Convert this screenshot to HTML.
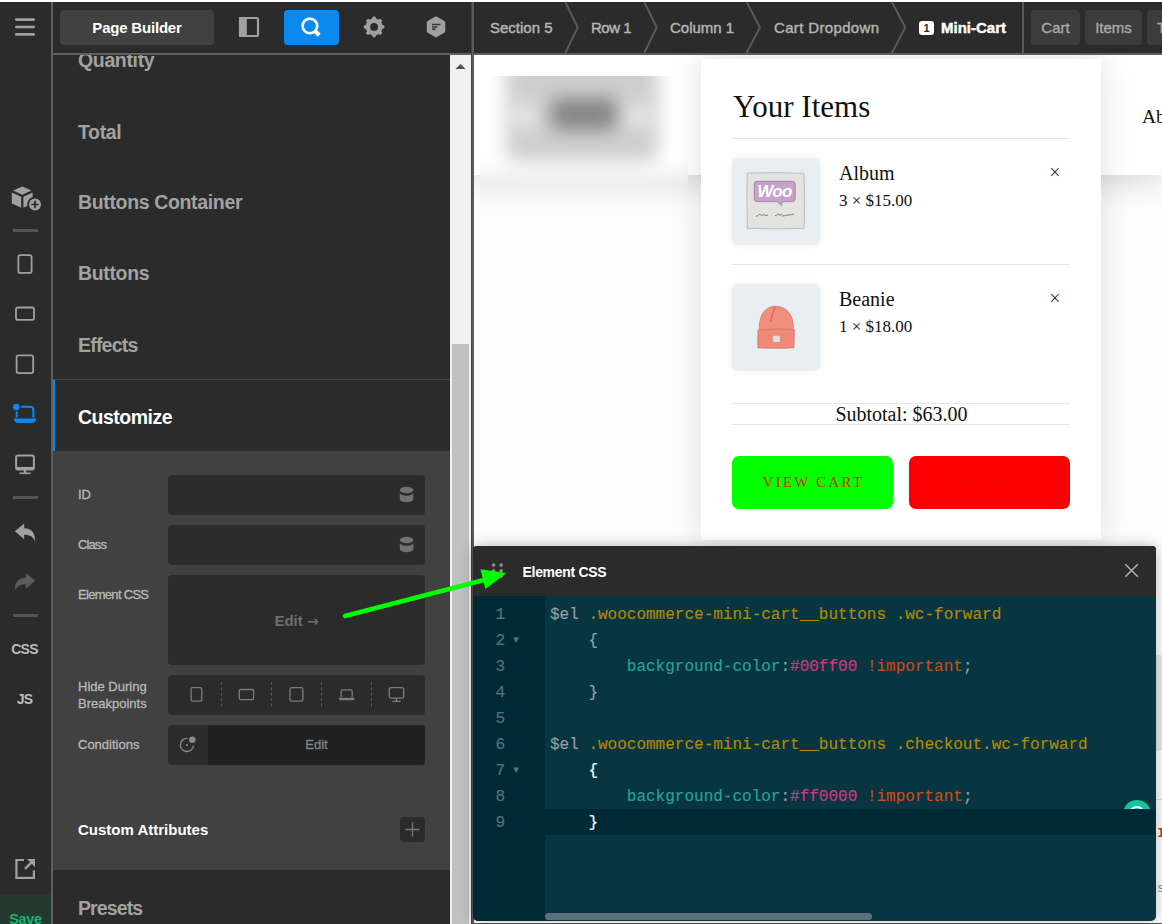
<!DOCTYPE html>
<html lang="en">
<head>
<meta charset="utf-8">
<title>Page Builder - Element CSS</title>
<style>
*{box-sizing:border-box;margin:0;padding:0}
html,body{width:1162px;height:924px;overflow:hidden;background:#fff}
body{position:relative;font-family:"Liberation Sans",sans-serif;color:#a0a0a0}
.abs{position:absolute}
svg{position:absolute;overflow:visible}
/* ---------- left icon bar ---------- */
#bar{left:0;top:2px;width:51px;height:922px;background:#2b2b2b}
#barline{left:51px;top:2px;width:2px;height:922px;background:#5e5e5e}
.sep{left:13px;width:25px;height:3px;background:#555}
.bartxt{left:-1px;width:51px;text-align:center;font-weight:700;font-size:14px;color:#bcbcbc;line-height:18px;letter-spacing:-.8px}
#save{left:0;top:894px;width:51px;height:30px;background:#24392f}
#savetxt{left:0;top:910px;width:51px;text-align:center;font-weight:700;font-size:14.5px;line-height:18px;color:#10b86c;letter-spacing:-.3px}
/* ---------- top bar ---------- */
#top{left:53px;top:2px;width:1109px;height:51px;background:#2b2b2b}
#topline{left:53px;top:53px;width:1109px;height:2px;background:#5e5e5e}
#pb{left:60px;top:10px;width:154px;height:35px;border-radius:4px;background:#414141;color:#fff;font-weight:700;font-size:15px;line-height:35px;text-align:center;letter-spacing:-.2px}
#srch{left:284px;top:10px;width:55px;height:35px;border-radius:4px;background:#0a8af0}
.crumb{top:18.5px;font-size:15px;line-height:18px;color:#b4b4b4;white-space:nowrap;-webkit-text-stroke:.45px}
.tab{top:10px;height:35px;border-radius:4px;background:#3c3c3c;color:#a8a8a8;font-size:15px;line-height:35px;text-align:center;white-space:nowrap;-webkit-text-stroke:.4px}
/* ---------- left panel ---------- */
#panel{left:53px;top:55px;width:397px;height:869px;background:#2b2b2b;overflow:hidden}
.item{left:25px;font-weight:700;font-size:19.5px;line-height:24px;color:#a2a2a2;white-space:nowrap;letter-spacing:-.35px}
#light{left:0;top:396px;width:397px;height:419px;background:#414141}
.lbl{left:25px;font-size:13px;line-height:17px;color:#b8b8b8;white-space:nowrap;-webkit-text-stroke:.3px}
.inp{left:115px;width:257px;background:#2b2b2b;border-radius:4px}
/* scrollbar */
#sb{left:450px;top:55px;width:21px;height:869px;background:#f1f1f1}
#sbt{left:452px;top:344px;width:17px;height:580px;background:#c1c1c1}
#vline{left:471px;top:2px;width:3px;height:922px;background:linear-gradient(90deg,#444 0,#444 1px,#5a5a5a 1px,#5a5a5a 3px)}
/* ---------- preview ---------- */
#pv{left:474px;top:55px;width:688px;height:869px;background:#fdfdfd;overflow:hidden;font-family:"Liberation Serif",serif;color:#111}
#hdr{left:0;top:0;width:688px;height:120px;background:#fff;box-shadow:0 0 36px rgba(0,0,0,.22)}
#logoclip{left:6px;top:21px;width:208px;height:158px;overflow:hidden;background:#fdfdfd}
#logoblur{left:-40px;top:-40px;width:288px;height:240px;background:#fdfdfd;filter:blur(9px)}
#dd{left:227px;top:4px;width:400px;height:481px;background:#fff;box-shadow:0 0 30px rgba(0,0,0,.13)}
.hr{left:31px;width:338px;height:1px;background:#e6e6e6}
.th{left:31px;width:88px;height:87px;border-radius:6px;background:#e8eef2;box-shadow:0 0 7px rgba(0,0,0,.07)}
.woo{left:51.5px;top:125px;width:44px;text-align:center;font:italic 700 17px/16px "Liberation Sans",sans-serif;color:#fff;letter-spacing:-.6px}
.nm{left:138px;font-size:20px;line-height:24px;white-space:nowrap}
.qt{left:138px;font-size:17px;line-height:20px;white-space:nowrap}
.rm{left:346px;width:16px;text-align:center;font-size:20px;line-height:24px;color:#333}
.btn{top:397px;width:161px;height:53px;border-radius:7px;text-align:center;font-size:15px;line-height:53px;letter-spacing:2.2px;white-space:nowrap;padding-left:2px}
/* ---------- css panel ---------- */
#cssp{left:473px;top:546px;width:683px;height:375px;background:#073642;border-radius:4px 4px 5px 5px;overflow:hidden;box-shadow:0 0 14px rgba(0,0,0,.27)}
#cssh{left:0;top:0;width:683px;height:50px;background:#2b2b2b}
#gut{left:0;top:50px;width:72px;height:325px;background:#002b36}
.ln{left:0;width:32px;text-align:right;font:16px/26px "Liberation Mono",monospace;color:#58707b;-webkit-text-stroke:.2px}
.cl{left:77px;font:16px/26px "Liberation Mono",monospace;white-space:pre;color:#93a1a1;-webkit-text-stroke:.15px}
.y{color:#b58900}.c{color:#2aa198}.m{color:#d33682}.o{color:#cb4b16}.w{color:#fff}
#actl{left:72px;top:263px;width:610px;height:26px;background:#002b36}
#gram{left:650px;top:254px;width:28px;height:28px;border-radius:14px;background:#15c39a}
#gram i{position:absolute;left:6px;top:6px;width:16px;height:16px;border-radius:8px;border:2.4px solid #fff;border-right-color:transparent}
#csst{left:49.5px;top:16.5px;font-weight:700;font-size:14px;line-height:18px;color:#fff;letter-spacing:-.3px;white-space:nowrap}
.fold{left:38px;width:10px;font:11px/26px "DejaVu Sans",sans-serif;color:#5c7480;text-align:center}
#hsb{left:72px;top:367px;width:327px;height:7px;border-radius:4px;background:#5b7079}
</style>
</head>
<body>
<!-- LEFT ICON BAR -->
<div class="abs" id="bar"></div>
<div class="abs" id="barline"></div>
<div class="abs sep" style="top:229px"></div>
<div class="abs sep" style="top:496px"></div>
<div class="abs sep" style="top:614px"></div>
<div class="abs bartxt" style="top:640px">CSS</div>
<div class="abs bartxt" style="top:690px">JS</div>
<div class="abs" id="save"></div>
<div class="abs" id="savetxt">Save</div>

<!-- TOP BAR -->
<div class="abs" id="top"></div>
<div class="abs" id="topline"></div>
<div class="abs" id="pb">Page Builder</div>
<div class="abs" id="srch"></div>
<div class="abs crumb" style="left:490px">Section 5</div>
<div class="abs crumb" style="left:591px;letter-spacing:-.5px">Row 1</div>
<div class="abs crumb" style="left:670px">Column 1</div>
<div class="abs crumb" style="left:774px;letter-spacing:.35px">Cart Dropdown</div>
<div class="abs" style="left:919px;top:21px;width:15px;height:14px;border-radius:3px;background:#fff;color:#2b2b2b;font-weight:700;font-size:11px;line-height:14px;text-align:center">1</div>
<div class="abs crumb" style="left:941px;color:#fff;font-weight:700">Mini-Cart</div>
<div class="abs tab" style="left:1031px;width:49px">Cart</div>
<div class="abs tab" style="left:1085px;width:57px">Items</div>
<div class="abs tab" style="left:1147px;width:60px;text-align:left;padding-left:10px">Totals</div>

<!-- LEFT PANEL -->
<div class="abs" id="panel">
  <div class="abs item" style="top:-7px">Quantity</div>
  <div class="abs item" style="top:65px">Total</div>
  <div class="abs item" style="top:135px">Buttons Container</div>
  <div class="abs item" style="top:206px">Buttons</div>
  <div class="abs item" style="top:278px;letter-spacing:-.8px">Effects</div>
  <div class="abs" style="left:0;top:324px;width:397px;height:1px;background:#454545"></div>
  <div class="abs" style="left:0;top:325px;width:2px;height:71px;background:#0a8af0"></div>
  <div class="abs item" style="top:349.5px;color:#fff;letter-spacing:-.5px">Customize</div>
  <div class="abs" id="light">
    <div class="abs lbl" style="top:35px">ID</div>
    <div class="abs inp" style="top:24px;height:40px"></div>
    <div class="abs lbl" style="top:85px;letter-spacing:-.9px">Class</div>
    <div class="abs inp" style="top:74px;height:40px"></div>
    <div class="abs lbl" style="top:135px;letter-spacing:-.7px">Element CSS</div>
    <div class="abs inp" style="top:124px;height:90px"></div>
    <div class="abs" style="left:115px;top:161px;width:257px;text-align:center;font-weight:700;font-size:15px;line-height:18px;color:#6e6e6e">Edit <span style="font-family:'DejaVu Sans',sans-serif;font-size:14px">→</span></div>
    <div class="abs lbl" style="top:227px">Hide During<br>Breakpoints</div>
    <div class="abs inp" style="top:224px;height:40px"></div>
    <div class="abs lbl" style="top:285px">Conditions</div>
    <div class="abs inp" style="top:274px;height:40px"></div>
    <div class="abs" style="left:155px;top:274px;width:217px;height:40px;background:#202020;border-radius:0 4px 4px 0;text-align:center;font-size:13px;line-height:40px;color:#848484;-webkit-text-stroke:.3px">Edit</div>
    <div class="abs" style="left:25px;top:370px;font-weight:700;font-size:15px;line-height:18px;color:#fff;white-space:nowrap">Custom Attributes</div>
    <div class="abs" style="left:347px;top:366px;width:25px;height:25px;background:#2b2b2b;border-radius:4px"></div>
  </div>
  <div class="abs item" style="top:841px;letter-spacing:-.9px">Presets</div>
</div>
<div class="abs" id="sb"></div>
<div class="abs" id="sbt"></div>
<div class="abs" id="vline"></div>

<!-- PREVIEW -->
<div class="abs" id="pv">
  <!-- page header -->
  <div class="abs" id="hdr"></div>
  <div class="abs" id="logoclip"><div class="abs" id="logoblur">
    <div class="abs" style="left:-100px;top:-100px;width:500px;height:239px;background:#fff;box-shadow:0 0 36px rgba(0,0,0,.22)"></div>
    <div class="abs" style="left:66px;top:14px;width:152px;height:111px;background:#cecece;border-radius:8px"></div>
    <div class="abs" style="left:111px;top:62px;width:66px;height:32px;background:#868686;border-radius:8px"></div>
    <div class="abs" style="left:73px;top:68px;width:24px;height:24px;background:#ebebeb;border-radius:12px"></div>
    <div class="abs" style="left:185px;top:68px;width:24px;height:24px;background:#ebebeb;border-radius:12px"></div>
  </div></div>
  <div class="abs" style="left:668px;top:49.5px;font-size:19.5px;line-height:24px;white-space:nowrap">About</div>
  <div class="abs" style="left:680px;top:600px;width:8px;height:94px;background:#e9e9e9"></div>
  <div class="abs" style="left:680px;top:694px;width:8px;height:1px;background:#d8d8d8"></div>
  <div class="abs" style="left:680px;top:744px;width:8px;height:1px;background:#dcdcdc"></div>
  <div class="abs" style="left:683.5px;top:771px;font-size:13px;line-height:16px;color:#e02b20;white-space:nowrap;font-family:'Liberation Mono',monospace;font-weight:700">Icon</div>
  <div class="abs" style="left:683px;top:826px;font-size:13px;line-height:16px;color:#8a8a8a;white-space:nowrap;font-family:'Liberation Mono',monospace">size</div>
  <!-- mini cart dropdown -->
  <div class="abs" id="dd">
    <div class="abs" style="left:32px;top:30px;font-size:31px;line-height:36px;white-space:nowrap">Your Items</div>
    <div class="abs hr" style="top:79px"></div>
    <div class="abs th" style="top:99px"></div>
    <svg style="left:31px;top:99px" width="88" height="87" viewBox="732 158 88 87">
<path d="M747.2 173.2L775 172.6L804 173.3L804.6 200L804.1 228.4L776 228.8L747.3 228.3L746.9 200Z" fill="#e3e3e1" stroke="#a9a9a9" stroke-width=".7"/>
<path d="M757.2 181.3H792.2A3 3 0 0 1 795.2 184.3V198.6A3 3 0 0 1 792.2 201.6H782.5L781.2 205.6L777.6 201.6H757.2A3 3 0 0 1 754.2 198.6V184.3A3 3 0 0 1 757.2 181.3Z" fill="#c9a2c9" stroke="#9c739d" stroke-width=".8"/>
<path d="M755.8 216.4C758 216 759 214.200 760 214.400S760.500 216 762 215.200S764 214.600 765 215.400L768 215.200M775 215.600C777 215.800 777.500 213.600 778.400 213.800S778.400 215.800 780 215.200S781.400 213.600 782 215.200S785 215.400 787 215.200S791 214.800 794 214" fill="none" stroke="#555" stroke-width=".7"/>
</svg>
    <div class="abs woo">Woo</div>
    <div class="abs nm" style="top:102px">Album</div>
    <div class="abs qt" style="top:132px">3 × $15.00</div>
    <div class="abs rm" style="top:101px">×</div>
    <div class="abs hr" style="top:205px"></div>
    <div class="abs th" style="top:225px"></div>
    <svg style="left:31px;top:225px" width="88" height="87" viewBox="732 284 88 87">
<path d="M759.4 330.5C758.600 318 763 307.200 774.500 306.200C788 306 794 316 793.400 330.500Z" fill="#f08f7b" stroke="#d96f5e" stroke-width=".7"/>
<path d="M775.400 306.600C773.500 311 771.500 316 770.600 321.600" fill="none" stroke="#e4604e" stroke-width="1.2"/>
<path d="M757.800 330.200C770 328.600 782 328.800 794.300 329.600L794 347.800C782 348.600 770 348.400 757.800 347.900Z" fill="#ef8a76" stroke="#d96f5e" stroke-width=".7"/>
<rect x="772.800" y="335.400" width="7.300" height="6.900" fill="#dedfdc" stroke="#c58a80" stroke-width=".5"/>
</svg>
    <div class="abs nm" style="top:228px">Beanie</div>
    <div class="abs qt" style="top:258px">1 × $18.00</div>
    <div class="abs rm" style="top:227px">×</div>
    <div class="abs hr" style="top:344px"></div>
    <div class="abs" style="left:32px;top:342.5px;width:337px;text-align:center;font-size:20px;line-height:24px">Subtotal: $63.00</div>
    <div class="abs hr" style="top:365px"></div>
    <div class="abs btn" style="left:31px;background:#00ff00;color:#c8321e">VIEW CART</div>
    <div class="abs btn" style="left:208px;background:#ff0000;color:#ee0606">CHECKOUT</div>
  </div>
</div>

<div class="abs" style="left:474px;top:921px;width:688px;height:2px;background:#fff"></div>
<div class="abs" style="left:474px;top:923px;width:688px;height:1px;background:#555"></div>
<!-- CSS PANEL -->
<div class="abs" id="cssp">
  <div class="abs" id="gut"></div>
  <div class="abs" id="gram"><i></i></div>
  <div class="abs" id="actl"></div>
  <div class="abs" id="cssh"></div>
  <div class="abs" id="csst">Element CSS</div>
  <div class="abs ln" style="top:56px">1</div><div class="abs cl" style="top:56px">$el <span class="y">.woocommerce-mini-cart__buttons .wc-forward</span></div>
  <div class="abs ln" style="top:82px">2</div><div class="abs cl" style="top:82px">    {</div>
  <div class="abs ln" style="top:108px">3</div><div class="abs cl" style="top:108px">        <span class="c">background-color</span>:<span class="m">#00ff00</span> <span class="o">!important</span>;</div>
  <div class="abs ln" style="top:134px">4</div><div class="abs cl" style="top:134px">    }</div>
  <div class="abs ln" style="top:160px">5</div><div class="abs cl" style="top:160px"></div>
  <div class="abs ln" style="top:186px">6</div><div class="abs cl" style="top:186px">$el <span class="y">.woocommerce-mini-cart__buttons .checkout.wc-forward</span></div>
  <div class="abs ln" style="top:212px">7</div><div class="abs cl" style="top:212px">    <span class="w">{</span></div>
  <div class="abs ln" style="top:238px">8</div><div class="abs cl" style="top:238px">        <span class="c">background-color</span>:<span class="m">#ff0000</span> <span class="o">!important</span>;</div>
  <div class="abs ln" style="top:264px">9</div><div class="abs cl" style="top:264px">    <span class="w">}</span></div>
  <div class="abs fold" style="top:81px">▾</div>
  <div class="abs fold" style="top:211px">▾</div>
  <div class="abs" id="hsb"></div>
</div>
<svg id="ov" width="1162" height="924" viewBox="0 0 1162 924" style="left:0;top:0;pointer-events:none">
<!-- hamburger -->
<g stroke="#a0a0a0" stroke-width="2.6" stroke-linecap="round"><path d="M16.3 19.6H33.7M16.3 27H33.7M16.3 34.4H33.7"/></g>
<!-- cube + plus -->
<g fill="#a0a0a0">
<path d="M22.3 186.6 L31.6 190.6 L22.3 194.8 L13 190.6Z"/>
<path d="M11.8 192.6 L21.2 196.8 V207.8 L11.8 203.4Z"/>
<path d="M23.4 196.8 L32.6 192.6 V197 A8 8 0 0 0 27.3 206 L23.4 207.8Z"/>
<circle cx="35" cy="204.5" r="6"/>
</g>
<path d="M35 200.8V208.2M31.3 204.5H38.7" stroke="#2b2b2b" stroke-width="1.7"/>
<!-- device icons -->
<g fill="none" stroke="#a0a0a0" stroke-width="1.8">
<rect x="18.4" y="255.2" width="13.2" height="17.7" rx="2"/>
<rect x="16" y="307.5" width="18" height="12.4" rx="2"/>
<rect x="16.6" y="355.3" width="16.6" height="17.8" rx="2"/>
</g>
<!-- laptop (active) -->
<g fill="none" stroke="#0a8af0" stroke-width="2">
<path d="M21 406.7H30.4A3 3 0 0 1 33.4 409.7V417.5"/>
<path d="M16.7 411.5V417.5"/>
</g>
<circle cx="16.3" cy="407" r="3.3" fill="#0a8af0"/>
<path d="M13.8 418.4H36.2A4.6 4.6 0 0 1 31.6 423H18.4A4.6 4.6 0 0 1 13.8 418.4Z" fill="#0a8af0"/>
<!-- desktop -->
<g fill="none" stroke="#a0a0a0">
<rect x="16.1" y="455.4" width="17.8" height="14" rx="2" stroke-width="2"/>
<path d="M16.1 468.4H33.9" stroke-width="3"/>
<path d="M25 470V473" stroke-width="2.4"/>
<path d="M19.4 473.3H30.6" stroke-width="1.6"/>
</g>
<!-- undo / redo -->
<path d="M14.8 531.3 L24.2 523.6 V528.2 C31 528.4 35.2 532 35.2 541.4 C33.2 536.6 30 534.8 24.2 534.7 V539.2Z" fill="#a0a0a0"/>
<path d="M35.2 580.8 L25.8 573.1 V577.7 C19 577.9 14.8 581.5 14.8 590.9 C16.8 586.1 20 584.3 25.8 584.2 V588.7Z" fill="#5c5c5c"/>
<!-- external link -->
<g fill="none" stroke="#a0a0a0" stroke-width="2.2">
<path d="M24 860H16.4V877.9H33.9V870.5"/>
<path d="M25 868.8L33 860.8" stroke-width="2.4"/>
</g>
<path d="M27 858.9H35V866.9Z" fill="#a0a0a0"/>
<!-- top bar: panel icon -->
<rect x="240" y="18" width="18" height="18" rx="1.5" fill="none" stroke="#a0a0a0" stroke-width="2.2"/>
<rect x="239" y="17" width="7.8" height="20" fill="#a0a0a0"/>
<!-- magnifier -->
<circle cx="309.9" cy="25.9" r="7.3" fill="none" stroke="#fff" stroke-width="2.6"/>
<path d="M315 31L319.2 35.2" stroke="#fff" stroke-width="4.2"/>
<!-- gear -->
<path d="M372.40 18.98 L373.09 17.05 L375.11 17.05 L375.80 18.98 L378.49 20.10 L380.35 19.22 L381.78 20.65 L380.90 22.51 L382.02 25.20 L383.95 25.89 L383.95 27.91 L382.02 28.60 L380.90 31.29 L381.78 33.15 L380.35 34.58 L378.49 33.70 L375.80 34.82 L375.11 36.75 L373.09 36.75 L372.40 34.82 L369.71 33.70 L367.85 34.58 L366.42 33.15 L367.30 31.29 L366.18 28.60 L364.25 27.91 L364.25 25.89 L366.18 25.20 L367.30 22.51 L366.42 20.65 L367.85 19.22 L369.71 20.10Z" fill="#a0a0a0" stroke="#a0a0a0" stroke-width="1" stroke-linejoin="round"/>
<circle cx="374.1" cy="26.9" r="3.9" fill="#2b2b2b"/>
<!-- hexagon -->
<path d="M436.00 18.50 L443.27 22.70 L443.27 31.10 L436.00 35.30 L428.73 31.10 L428.73 22.70Z" fill="#a0a0a0" stroke="#a0a0a0" stroke-width="4" stroke-linejoin="round"/>
<path d="M432 24.5H440.4M432 26.9H437.4M432 29.3H435.6" stroke="#3a3a3a" stroke-width="1.5"/>
<!-- scroll arrow -->
<path d="M455.4 69H465.6L460.5 63.9Z" fill="#505050"/>
<!-- breadcrumb chevrons -->
<g fill="none" stroke="#5a5a5a" stroke-width="1.9">
<path d="M565.3 2L577.7 27.5L565.3 53"/>
<path d="M644.3 2L656.7 27.5L644.3 53"/>
<path d="M746.5 2L759.9 27.5L746.5 53"/>
<path d="M891.9 2L905.3 27.5L891.9 53"/>
</g>
<rect x="1022" y="2" width="2" height="51" fill="#5a5a5a"/>
<!-- db icons -->
<g fill="#717171">
<ellipse cx="406.6" cy="490" rx="6.8" ry="3.2"/>
<path d="M399.8 492.6A6.8 3.2 0 0 0 413.4 492.6V499A6.8 3.2 0 0 1 399.8 499Z"/>
<ellipse cx="406.6" cy="540" rx="6.8" ry="3.2"/>
<path d="M399.8 542.6A6.8 3.2 0 0 0 413.4 542.6V549A6.8 3.2 0 0 1 399.8 549Z"/>
</g>
<!-- breakpoint icons -->
<g fill="none" stroke="#7c7c7c" stroke-width="1.3">
<rect x="191.1" y="687.6" width="10.7" height="13.6" rx="1.6"/>
<rect x="239.3" y="689.5" width="14.3" height="10.1" rx="1.6"/>
<rect x="290" y="687.6" width="12.9" height="13.6" rx="1.6"/>
<path d="M341.1 697.3V691.4A1.5 1.5 0 0 1 342.6 689.9H350.7A1.5 1.5 0 0 1 352.2 691.4V697.3"/>
<rect x="389.3" y="687.6" width="14.3" height="10.6" rx="1.5"/>
<path d="M396.4 698.4V701M392.4 701.3H400.6"/>
</g>
<path d="M338.7 697.7H354.6A2.6 2.6 0 0 1 352 700.3H341.3A2.6 2.6 0 0 1 338.7 697.7Z" fill="#7c7c7c"/>
<g stroke="#585858" stroke-width="1" stroke-dasharray="3 2.4">
<path d="M221.5 682V708M271.5 682V708M321.5 682V708M371.5 682V708"/>
</g>
<!-- conditions icon -->
<path d="M187.6 738.4A6.6 6.6 0 1 0 193.5 745.6" fill="none" stroke="#8a8a8a" stroke-width="1.4"/>
<circle cx="192.3" cy="739.8" r="3.3" fill="#8a8a8a"/>
<circle cx="187" cy="745" r="1.1" fill="#8a8a8a"/>
<!-- plus -->
<path d="M412.5 822.5V836.5M405.5 829.5H419.5" stroke="#777" stroke-width="1.4"/>
<!-- css panel: drag dots, close -->
<g fill="#8e8e8e">
<circle cx="493.6" cy="565.1" r="1.8"/><circle cx="501.1" cy="565.1" r="1.8"/>
<circle cx="493.6" cy="570.7" r="1.8"/><circle cx="501.1" cy="570.7" r="1.8"/>
<circle cx="493.6" cy="576.3" r="1.8"/><circle cx="501.1" cy="576.3" r="1.8"/>
</g>
<path d="M1125.3 564.3L1137.8 576.8M1137.8 564.3L1125.3 576.8" stroke="#b4b4b4" stroke-width="1.5"/>
<!-- green annotation arrow -->
<path d="M345 616L486 579.6" stroke="#00ff00" stroke-width="4.6" stroke-linecap="round"/>
<path d="M506.5 573.1L480.5 569.2L485.4 588.9Z" fill="#00ff00"/>
</svg>
</body>
</html>
